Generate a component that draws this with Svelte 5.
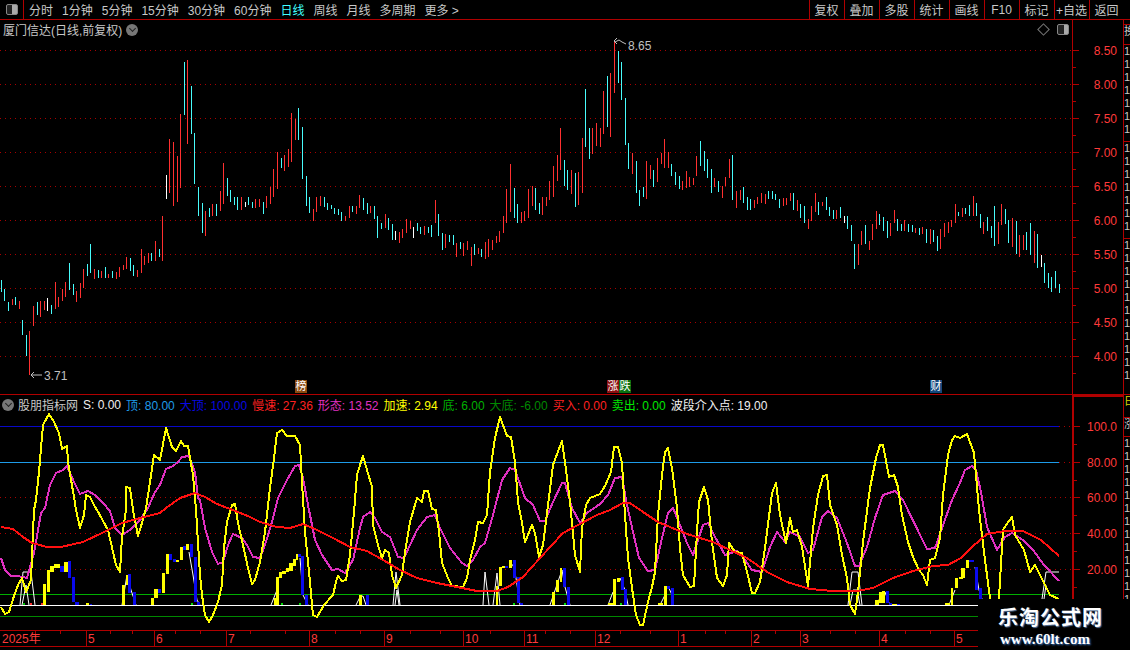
<script lang="ts">
  // candles: colour letter + top,bottom in page pixels, one entry per trading day
  const candleData = `c280,292 c289,301 c302,311 r299,305 c297,305 r301,309 c320,335 c335,356 r331,375 r306,326
c302,315 r301,317 r301,310 w298,311 c305,314 r282,309 r297,307 r289,301 r282,297 c263,290
c284,295 r291,302 r283,298 r269,288 c264,276 c244,273 r269,279 c270,278 r271,278 c267,278
r274,278 c271,278 r272,279 r267,277 r265,270 r257,269 c258,271 c265,276 r270,277 r249,273
r256,265 r253,263 c253,261 r241,261 c249,257 r216,261 w175,199 r139,193 r142,206 r156,202
r114,188 c62,115 r60,144 c86,134 c133,184 c187,216 c203,233 r211,236 c208,217 r204,216
c204,216 r191,211 r163,204 c178,196 c190,202 c197,205 c197,210 r197,210 w202,207 c197,205
c202,208 r199,208 r199,207 c202,214 r196,208 r187,204 r169,197 r152,189 c158,168 r155,171
r149,167 r113,162 r119,140 c108,140 c127,179 c176,206 c197,213 r209,221 r197,212 r196,206
c197,207 c203,210 c205,209 c208,214 c209,215 c212,221 r216,221 r206,218 c206,212 r206,214
r195,208 c198,210 c203,214 r206,213 c206,219 c216,238 c223,229 r214,228 c218,230 c224,240
w231,240 r232,243 r229,238 r219,233 r221,229 w227,238 c223,231 c227,234 r226,235 c227,233
c225,237 r200,223 c214,236 c233,250 r234,248 c235,242 c235,245 r243,257 c242,249 r243,256
r241,250 r247,266 c244,255 r248,254 c249,257 r242,259 r239,257 r240,250 r236,243 r231,242
r216,233 r189,223 r164,212 c188,218 c204,223 r212,223 r211,221 r189,218 r186,206 c188,210
c203,214 r197,215 r197,206 r181,200 r166,197 r155,181 r128,170 c160,186 c170,190 r170,194
c173,207 r172,205 r138,193 c89,147 c128,159 r128,154 r123,146 r128,147 r91,134 c76,127
r73,137 r42,93 c51,83 c62,100 c98,145 c143,169 r153,174 c161,193 c190,206 c187,197
r161,199 r165,179 c170,187 r158,182 r153,164 r139,168 r152,168 c164,176 c172,185 c176,189
r181,190 r171,188 r177,187 r178,185 r156,176 c141,166 c151,171 c159,178 c169,193 r178,187
c181,192 r186,198 r177,186 r159,178 c155,200 r191,208 r190,200 c187,203 c197,210 c199,210
r200,208 r197,204 r193,203 r194,204 c191,199 c191,199 c194,200 c199,208 r198,206 r198,205
r193,201 c193,210 r200,211 c204,218 c206,223 r219,229 r206,221 r193,212 c202,215 r202,206
c197,210 c207,216 c210,219 r210,219 c207,218 w216,223 c216,229 c225,241 c244,269 r244,265
r231,245 c225,244 r241,250 r224,240 r211,229 c214,225 c217,231 c221,238 r223,236 r210,223
c219,231 c224,231 r220,231 c224,232 c225,232 r228,233 c228,235 r227,234 c229,243 r229,244
c230,242 c236,251 r229,249 r223,237 r222,233 r220,227 r204,223 c212,216 r208,217 c208,214
c205,216 r196,216 c203,216 c214,228 r222,234 c217,231 c226,238 c206,246 r222,244 r204,225
c209,224 c220,243 r218,247 c221,254 r235,257 r235,250 c232,250 c223,255 r231,263 c234,268
w255,267 c263,283 c273,288 c277,292 c271,288 c284,293`;

  const candleColor = { r: '#ff3030', c: '#48fcfc', w: '#ffffff' };

  const candles = candleData.split(/\s+/).map((item, i) => {
    const [top, bottom] = item.slice(1).split(',').map(Number);
    return { x: Math.floor(1.3 + 3.586 * i), top, height: bottom - top, color: candleColor[item[0]] };
  });

  const yellowLine = `1,607 5,614 9,612 14,596 18,585 22,578 26,592 31,580 34,510 36,500 39,472 43,425 49,414 54,422 59,433 62,449 67,446 68,462 75,503 76,510 80,528 84,515 86,495 90,497 95,507 97,510 108,530 116,565 120,572 122,537 126,510 126,487 130,488 133,510 138,536 142,523 146,508 150,482 154,455 160,460 166,428 172,447 176,451 181,441 184,446 188,446 193,475 196,510 200,575 202,595 205,615 209,622 213,615 218,602 222,585 224,548 227,522 232,505 235,504 238,523 243,545 248,568 252,584 255,580 260,562 265,532 270,488 274,458 277,433 282,430 287,436 295,436 300,445 302,482 305,532 310,582 313,615 317,617 324,605 333,595 337,578 338,576 342,581 346,580 350,555 354,512 357,475 361,462 363,456 367,470 372,487 373,525 378,545 382,558 385,550 389,553 392,575 396,588 402,575 405,552 410,522 417,498 422,502 424,491 428,491 432,509 436,510 439,532 442,563 448,578 452,586 463,587 467,578 470,560 475,540 478,522 483,523 487,515 490,472 495,438 500,417 507,436 511,437 515,462 518,502 522,523 525,542 532,525 535,533 539,557 543,545 548,505 553,465 562,441 565,462 570,502 575,555 580,572 582,528 586,505 590,498 600,494 605,486 611,472 614,447 618,447 622,463 625,515 628,558 632,588 636,615 640,625 643,625 648,602 652,587 655,572 658,515 662,475 665,452 668,448 672,468 677,508 680,548 683,575 690,587 694,586 697,532 699,502 704,487 708,500 712,542 717,578 723,586 727,575 729,543 735,552 742,553 747,572 752,593 755,593 760,582 765,548 772,493 776,483 780,515 786,543 790,518 793,532 797,530 802,547 808,586 813,528 818,495 823,476 827,475 830,505 837,525 842,555 847,578 850,605 855,614 858,592 863,542 870,488 876,458 880,445 883,445 889,477 894,475 898,487 902,515 908,542 913,557 919,570 923,575 927,585 930,560 935,558 940,538 943,495 948,455 952,440 955,436 960,438 967,434 970,442 974,453 976,475 979,510 985,560 990,598 994,608 999,598 1003,530 1006,525 1012,517 1015,535 1024,550 1030,572 1035,565 1044,583 1050,595 1059,599`;

  const magentaLine = `1,558 5,570 11,576 18,576 27,578 34,553 41,513 45,508 50,485 56,473 63,470 67,466 74,482 80,494 88,491 95,495 103,503 110,511 115,528 122,535 130,530 140,520 148,508 155,492 160,485 166,469 173,466 178,462 182,457 189,456 195,472 198,498 200,500 205,528 212,552 218,564 223,562 228,545 233,534 242,538 247,545 253,557 260,558 265,545 272,522 278,498 287,480 295,466 299,465 303,478 308,505 315,540 322,555 332,570 338,569 345,573 353,560 360,528 363,517 370,512 375,518 382,532 390,537 398,557 404,558 410,545 417,530 427,517 435,515 440,528 450,548 462,563 467,566 473,560 480,547 485,543 493,515 502,480 510,468 515,470 525,498 533,505 540,521 545,521 553,502 562,483 565,483 572,508 580,523 587,513 600,504 608,495 615,478 622,477 627,505 633,532 639,558 648,571 655,570 662,538 668,513 673,508 680,525 687,543 693,555 703,525 708,523 715,537 725,555 737,551 743,557 752,570 762,572 770,547 777,532 785,542 790,532 800,537 808,553 813,550 822,517 828,511 837,518 847,543 855,566 859,566 867,547 875,518 883,495 895,491 903,500 925,545 927,549 935,548 942,528 952,500 960,483 965,470 972,466 976,470 981,492 987,527 997,550 1005,537 1012,533 1023,540 1033,550 1044,565 1059,581`;

  const redLine = `1,527 13,529 23,537 32,543 47,547 61,547 83,542 104,532 122,523 144,517 160,513 166,508 180,498 195,493 205,497 217,504 233,510 250,517 260,522 277,527 290,528 303,524 315,529 333,538 350,547 367,551 383,560 400,570 417,578 437,583 457,587 477,591 497,591 508,587 523,577 540,558 563,533 580,524 597,515 610,510 623,503 630,503 643,512 658,522 670,527 687,534 713,542 730,550 747,558 767,572 787,582 810,589 833,591 857,591 873,588 893,578 913,571 933,566 948,565 961,558 972,547 987,534 1005,531 1023,531 1041,540 1059,556`;

  // yellow and blue sticks: x1,x2,top,bottom
  const yellowSticks = `43,46,584,605 47,50,570,592 50,54,566,572 54,60,564,568 64,68,562,572 86,89,603,605 122,125,585,605 126,128,575,585 151,154,598,605 154,158,589,598 162,165,573,593 166,169,554,574 176,179,560,562 180,183,547,560 186,189,544,550 274,276,598,605 276,279,577,605 279,282,572,578 282,286,571,574 286,289,568,572 289,293,563,571 293,296,559,566 296,298,554,560 359,362,595,605 496,498,586,605 499,502,567,586 502,505,566,568 509,512,560,568 552,555,592,605 556,559,580,592 560,562,568,582 608,613,603,605 613,616,579,605 617,620,578,582 658,663,603,605 664,667,586,605 875,879,600,605 879,882,592,603 882,885,591,603 892,897,604,605 945,950,603,605 951,953,588,605 955,958,578,588 959,963,577,579 961,965,568,578 966,969,560,568`;

  const blueSticks = `60,64,566,572 68,71,561,578 72,75,577,602 75,79,602,605 90,92,604,605 128,131,574,593 133,136,592,605 158,161,589,593 169,172,554,560 173,176,559,562 183,186,546,550 190,193,544,557 194,197,557,602 197,200,602,605 298,301,554,557 301,304,556,595 305,308,595,605 366,369,595,605 505,508,566,568 513,516,560,578 517,520,577,603 520,523,603,605 563,566,568,587 567,570,587,605 621,624,577,590 624,627,589,605 667,670,586,589 671,674,588,605 886,889,591,603 889,892,603,605 897,900,604,605 969,974,560,562 975,978,567,590 979,982,588,599`;

  const parseSticks = (text) =>
    text.split(' ').map((s) => {
      const [x1, x2, top, bottom] = s.split(',').map(Number);
      return { x: x1, width: x2 - x1, top, height: bottom - top };
    });

  const whiteLines = [
    '20,605 23,572 31,572 35,605',
    '22,605 26,585 29,605',
    '122,605 127,575 131,590 136,605',
    '189,552 193,575 197,600 200,605',
    '271,605 277,590',
    '300,558 303,595 307,603 308,605',
    '356,605 360,597 363,596 366,605',
    '393,605 396,572 400,605',
    '395,605 397,590 399,605',
    '483,605 485,572 489,605',
    '493,605 497,573 500,605',
    '509,565 513,565 516,578 520,605',
    '550,605 562,570 565,587 570,605',
    '608,605 613,592',
    '620,578 625,590 628,605',
    '660,605 665,595',
    '668,586 672,595',
    '848,605 852,572 858,572 862,605',
    '850,605 853,590 857,590 860,605',
    '875,605 885,592 889,603',
    '949,605 955,590',
    '975,567 979,590 982,599',
    '1042,599 1046,572 1059,572',
    '1044,599 1046,585'
  ];

  const dots = [
    [23, '#00c000'], [30, '#ff3030'], [41, '#ff3030'], [191, '#00e000'], [281, '#00e000'], [299, '#00e000'],
    [620, '#00e000'], [855, '#00e000'], [513, '#00e000'], [564, '#00e000']
  ];

  const priceGrid = [
    ['8.50', 50], ['8.00', 84], ['7.50', 118], ['7.00', 152], ['6.50', 186],
    ['6.00', 220], ['5.50', 254], ['5.00', 288], ['4.50', 322], ['4.00', 356]
  ];
  const scaleGrid = [['100.0', 426], ['80.00', 462], ['60.00', 497], ['40.00', 533], ['20.00', 569]];

  const months = [
    ['2025年', 0], ['5', 86], ['6', 154], ['7', 226], ['8', 309], ['9', 384], ['10', 463], ['11', 524],
    ['12', 595], ['1', 678], ['2', 751], ['3', 800], ['4', 879], ['5', 954]
  ];
  const minorTicks = [35, 60, 110, 132, 175, 200, 250, 285, 335, 360, 410, 440, 490, 545, 570, 620, 650, 705, 725, 775, 830, 855, 905, 930];

  const tabs = ['分时', '1分钟', '5分钟', '15分钟', '30分钟', '60分钟', '日线', '周线', '月线', '多周期', '更多 >'];
  const actions = ['复权', '叠加', '多股', '统计', '画线', 'F10', '标记', '+自选', '返回'];

  const legend = [
    ['S: 0.00', '#f0f0f0'], ['顶: 80.00', '#1e9be8'], ['大顶: 100.00', '#0808e0'], ['慢速: 27.36', '#ff2020'],
    ['形态: 13.52', '#e030c0'], ['加速: 2.94', '#ffff00'], ['底: 6.00', '#00b000'], ['大底: -6.00', '#008800'],
    ['买入: 0.00', '#ff2020'], ['卖出: 0.00', '#00e800'], ['波段介入点: 19.00', '#f0f0f0']
  ];

  const stripRows = [
    { h: 5, t: [] },
    { h: 20, t: ['换手'] },
    { h: 97, t: ['12', '10', '12', '15', '11', '12', '13'] },
    { h: 97, t: ['10', '12', '13', '11', '15', '12', '10'] },
    { h: 156, t: ['12', '11', '13', '10', '12', '15', '11', '12', '13', '10', '12'] },
    { h: 23, t: ['日'], yellow: true },
    { h: 19, t: ['涨'] },
    { h: 213, t: ['10', '12', '13', '11', '15', '12', '10', '11', '13', '12', '15', '10', '12', '11', '13', '10'] }
  ];
</script>

<div class="screen">
  <header class="toolbar">
    <div class="panel-btn"><span class="layout-icon"></span></div>
    <nav class="tabs">
      {#each tabs as tab}
        <span class:active={tab === '日线'}>{tab}</span>
      {/each}
    </nav>
    <div class="actions">
      {#each actions as action}
        <span class="action">{action}</span>
      {/each}
    </div>
  </header>

  <div class="workspace">
    <div class="charts">
      <section class="panel main-panel">
        <div class="chart-title">
          厦门信达(日线,前复权)
          <span class="chevron"></span>
        </div>
        <div class="chart-tools">
          <span class="diamond"></span>
          <span class="layout-icon"></span>
        </div>

        <svg width="1123" height="375" viewBox="0 20 1123 375">
          {#each priceGrid as [label, y]}
            <line class="grid" x1="0" x2="1072" y1={y + 0.5} y2={y + 0.5} />
            <line class="tick" x1="1073" x2="1079" y1={y + 0.5} y2={y + 0.5} />
            <line class="tick" x1="1073" x2="1076" y1={y + 17.5} y2={y + 17.5} />
            <text class="scale" x="1117" y={y + 5}>{label}</text>
          {/each}
          <line class="axis" x1="1072.5" x2="1072.5" y1="20" y2="395" />
          <line class="axis" x1="0" x2="1123" y1="394.5" y2="394.5" />
          {#each candles as c}
            <rect x={c.x} y={c.top} width="1" height={c.height} fill={c.color} />
          {/each}

          <polyline class="note" points="615,42 619,40 622,42 626,44" />
          <polyline class="note" points="617,38 614,41 617,44" />
          <text class="note-text" x="628" y="50">8.65</text>

          <polyline class="note" points="31,375 42,375" />
          <polyline class="note" points="34,372 31,375 34,378" />
          <text class="note-text" x="44" y="380">3.71</text>
        </svg>

        <span class="badge" style="left: 295px; top: 360px; background: #8a4a10">榜</span>
        <span class="badge" style="left: 607px; top: 360px; background: #8c1010">涨</span>
        <span class="badge" style="left: 619px; top: 360px; background: #0c7010">跌</span>
        <span class="badge" style="left: 930px; top: 360px; background: #14487c">财</span>
      </section>

      <section class="panel sub-panel">
        <div class="legend">
          <span class="chevron"></span>
          <span class="legend-name">股朋指标网</span>
          {#each legend as [text, color]}
            <span style="color: {color}">{text}</span>
          {/each}
        </div>

        <svg width="1123" height="255" viewBox="0 395 1123 255">
          {#each scaleGrid as [label, y]}
            <line class="tick" x1="1074" x2="1080" y1={y + 0.5} y2={y + 0.5} />
            <line class="tick" x1="1074" x2="1077" y1={y + 18.5} y2={y + 18.5} />
            <text class="scale" x="1117" y={y + 5}>{label}</text>
          {/each}
          {#each [497, 533, 569] as y}
            <line class="grid" x1="0" x2="1072" y1={y + 0.5} y2={y + 0.5} />
          {/each}
          <line class="grid" x1="1059" x2="1072" y1="426.5" y2="426.5" />
          <line class="grid" x1="1059" x2="1072" y1="462.5" y2="462.5" />
          <line class="axis thick" x1="1073" x2="1073" y1="395" y2="600" />
          <line class="axis thick" x1="1072" x2="1123" y1="396" y2="396" />

          <line class="level" stroke="#0808c8" x1="0" x2="1059" y1="426.5" y2="426.5" />
          <line class="level" stroke="#1e9be8" x1="0" x2="1059" y1="462.5" y2="462.5" />
          <line class="level" stroke="#00b000" x1="0" x2="1059" y1="594.5" y2="594.5" />
          <line class="level" stroke="#ffffff" x1="0" x2="978" y1="605.5" y2="605.5" />
          <line class="level" stroke="#008800" x1="0" x2="978" y1="616.5" y2="616.5" />

          {#each whiteLines as points}
            <polyline class="thin" {points} />
          {/each}
          {#each parseSticks(yellowSticks) as s}
            <rect x={s.x} y={s.top} width={s.width} height={s.height} fill="#ffff00" />
          {/each}
          {#each parseSticks(blueSticks) as s}
            <rect x={s.x} y={s.top} width={s.width} height={s.height} fill="#0a0aee" />
          {/each}
          {#each dots as [x, color]}
            <rect {x} y="603" width="2" height="2" fill={color} />
          {/each}

          <polyline class="curve" stroke="#e030c0" points={magentaLine} />
          <polyline class="curve" stroke="#ffff00" points={yellowLine} />
          <polyline class="curve" stroke="#ff1010" points={redLine} />

          <line class="axis" x1="0" x2="1000" y1="630.5" y2="630.5" />
          <line class="axis" x1="0" x2="1000" y1="646.5" y2="646.5" />
          {#each minorTicks as x}
            <line class="axis" x1={x + 0.5} x2={x + 0.5} y1="631" y2="634" />
          {/each}
          {#each months as [label, x]}
            {#if x > 0}
              <line class="axis" x1={x + 0.5} x2={x + 0.5} y1="631" y2="646" />
            {/if}
            <text class="month" x={x + 2} y="643">{label}</text>
          {/each}
        </svg>

        <div class="watermark">
          <strong>乐淘公式网</strong>
          <b>www.60lt.com</b>
        </div>
      </section>
    </div>

    <aside class="strip">
      {#each stripRows as row}
        <div class="strip-row" class:yellow={row.yellow} style="height: {row.h}px">
          {#each row.t as t}
            <div>{t}</div>
          {/each}
        </div>
      {/each}
    </aside>
  </div>
</div>

<style>
  :global(body) {
    margin: 0;
    background: #000;
  }

  .screen {
    width: 1130px;
    height: 650px;
    overflow: hidden;
    display: flex;
    flex-direction: column;
    background: #000;
    color: #c8c8c8;
    font-family: 'Liberation Sans', 'Noto Sans CJK SC', sans-serif;
    font-size: 12px;
  }

  .toolbar {
    height: 19px;
    flex: none;
    display: flex;
    align-items: stretch;
    border-bottom: 1px solid #b00000;
  }

  .panel-btn {
    width: 23px;
    flex: none;
    display: flex;
    align-items: center;
    justify-content: center;
    border-right: 1px solid #b00000;
  }

  .layout-icon {
    display: block;
    box-sizing: border-box;
    width: 12px;
    height: 11px;
    border: 1px solid #888;
    border-radius: 2px;
    background: linear-gradient(90deg, #222 0 55%, #aaa 55% 100%);
  }

  .tabs {
    display: flex;
    align-items: center;
    gap: 9px;
    padding-left: 5px;
    white-space: nowrap;
  }

  .tabs .active {
    color: #40ffff;
  }

  .actions {
    margin-left: auto;
    display: flex;
    margin-right: 6.5px;
  }

  .action {
    box-sizing: border-box;
    width: 35px;
    display: flex;
    align-items: center;
    justify-content: center;
    border-left: 1px solid #b00000;
    white-space: nowrap;
  }

  .workspace {
    flex: 1;
    min-height: 0;
    display: flex;
  }

  .charts {
    width: 1123px;
    flex: none;
    display: flex;
    flex-direction: column;
  }

  .panel {
    position: relative;
    flex: none;
  }

  .panel svg {
    display: block;
  }

  .main-panel {
    height: 375px;
  }

  .sub-panel {
    height: 255px;
  }

  .chart-title {
    position: absolute;
    left: 3px;
    top: 1px;
    display: flex;
    align-items: center;
    gap: 4px;
    height: 17px;
  }

  .chevron {
    display: inline-block;
    position: relative;
    width: 12px;
    height: 12px;
    border-radius: 50%;
    background: #777;
  }

  .chevron::after {
    content: '';
    position: absolute;
    left: 3.5px;
    top: 2.5px;
    width: 4px;
    height: 4px;
    border-right: 1px solid #222;
    border-bottom: 1px solid #222;
    transform: rotate(45deg);
  }

  .chart-tools {
    position: absolute;
    left: 1039px;
    top: 4px;
    display: flex;
    align-items: center;
    gap: 9px;
  }

  .diamond {
    display: block;
    width: 7px;
    height: 7px;
    border: 1px solid #777;
    transform: rotate(45deg);
  }

  .grid {
    stroke: #a80000;
    stroke-width: 1;
    stroke-dasharray: 1 4;
    shape-rendering: crispEdges;
  }

  .tick,
  .axis {
    stroke: #b00000;
    stroke-width: 1;
    shape-rendering: crispEdges;
  }

  .axis.thick {
    stroke-width: 2;
  }

  .scale {
    fill: #ff3a3a;
    font-size: 12px;
    text-anchor: end;
  }

  .note {
    fill: none;
    stroke: #c0c0c0;
    stroke-width: 1;
  }

  .note-text {
    fill: #c0c0c0;
    font-size: 12px;
  }

  .badge {
    position: absolute;
    width: 12px;
    height: 13px;
    display: flex;
    align-items: center;
    justify-content: center;
    color: #fff;
    font-size: 11px;
    line-height: 1;
  }

  .legend {
    position: absolute;
    left: 2px;
    top: 1px;
    height: 17px;
    display: flex;
    align-items: center;
    gap: 5px;
    white-space: nowrap;
    z-index: 1;
  }

  .legend-name {
    margin-left: -1px;
  }

  .level {
    stroke-width: 1;
    shape-rendering: crispEdges;
  }

  .thin {
    fill: none;
    stroke: #ffffff;
    stroke-width: 1;
  }

  .curve {
    fill: none;
    stroke-width: 2;
    stroke-linejoin: round;
    shape-rendering: crispEdges;
  }

  .month {
    fill: #ff3a3a;
    font-size: 12px;
  }

  .watermark {
    position: absolute;
    left: 978px;
    top: 204px;
    width: 152px;
    height: 51px;
    background: #000;
    display: flex;
    flex-direction: column;
    align-items: center;
    padding-right: 18px;
    box-sizing: border-box;
  }

  .watermark strong {
    margin-top: 5px;
    margin-left: 11px;
    font-size: 20px;
    line-height: 26px;
    letter-spacing: 1px;
    color: #fff;
    text-shadow: 1px 1px 1px #5a78a0;
    font-family: 'Noto Sans CJK SC', sans-serif;
    white-space: nowrap;
  }

  .watermark b {
    margin-top: 1px;
    font-size: 15px;
    line-height: 17px;
    color: #fff;
    text-shadow: 1px 1px 2px #3f7fd0;
    font-family: 'Liberation Serif', serif;
  }

  .strip {
    width: 7px;
    flex: none;
    overflow: hidden;
    box-sizing: border-box;
    border-left: 1px solid #b00000;
    font-size: 11px;
    line-height: 13px;
    color: #c8c8c8;
    white-space: nowrap;
  }

  .strip-row {
    overflow: hidden;
    border-bottom: 1px solid #b00000;
    box-sizing: border-box;
  }

  .strip-row.yellow {
    color: #d8d800;
  }
</style>
